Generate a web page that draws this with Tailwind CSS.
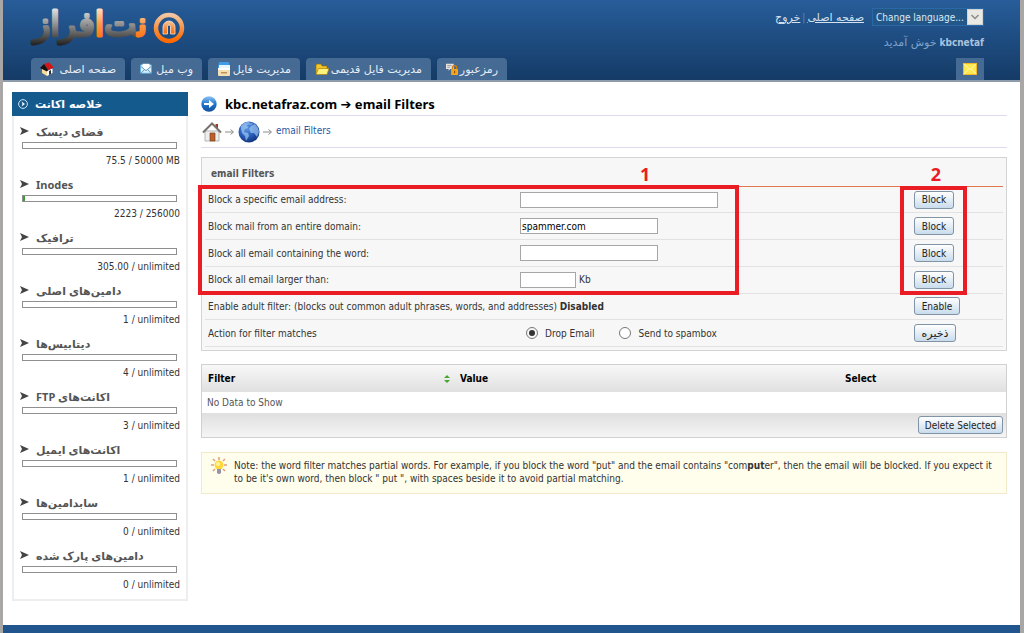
<!DOCTYPE html>
<html lang="en">
<head>
<meta charset="utf-8">
<title>email Filters</title>
<script src="https://cdn.jsdelivr.net/npm/@tailwindcss/browser@4"></script>
</head>
<body class="min-h-screen bg-[#a9a7a6] pl-[3px] pr-1 font-['DejaVu_Sans_Condensed','DejaVu_Sans',sans-serif] text-[10px] leading-[13px] text-[#333] [&_[lang=fa]]:font-['DejaVu_Sans'] [&_[lang=fa]]:text-[11px]">
<div class="flex min-h-screen flex-col bg-white">

<header class="flex h-[82px] justify-between border-b-2 border-[#8e9bab] bg-linear-to-b from-[#275d9a] to-[#153b66] pr-9 pl-7">
  <div class="flex flex-col justify-between">
    <a href="#" aria-label="نت افراز" class="flex h-12 items-center gap-1">
      <svg class="h-12 w-[118px] overflow-visible" viewBox="0 0 118 48" direction="rtl">
        <defs>
          <linearGradient id="steel" gradientUnits="userSpaceOnUse" x1="0" y1="5" x2="0" y2="46"><stop offset="0" stop-color="#f4f4f4"/><stop offset=".5" stop-color="#8b8b8b"/><stop offset="1" stop-color="#1c1c1c"/></linearGradient>
          <linearGradient id="flame" gradientUnits="userSpaceOnUse" x1="0" y1="5" x2="0" y2="42"><stop offset="0" stop-color="#fff0e2"/><stop offset=".5" stop-color="#ff9a4a"/><stop offset="1" stop-color="#ff6a00"/></linearGradient>
        </defs>
        <text x="116" y="36" font-family="DejaVu Sans" font-size="34" stroke-width="3" stroke-linejoin="round"><tspan fill="url(#flame)" stroke="url(#flame)">ن</tspan><tspan fill="url(#steel)" stroke="url(#steel)">ت‌</tspan><tspan fill="url(#flame)" stroke="url(#flame)">ا</tspan><tspan fill="url(#steel)" stroke="url(#steel)">فراز</tspan></text>
      </svg>
      <svg class="mt-2 size-8" viewBox="0 0 32 32">
        <defs><linearGradient id="ring" x1="0" y1="0" x2="0" y2="1"><stop offset="0" stop-color="#f3c6a0"/><stop offset=".5" stop-color="#f99244"/><stop offset="1" stop-color="#ff6a00"/></linearGradient></defs>
        <circle cx="16" cy="16" r="13" fill="none" stroke="url(#ring)" stroke-width="4.5"/>
        <path d="M10 22v-7a6 6 0 0 1 12 0v7h-4.500v-7.500a1.500 1.500 0 0 0-3 0V22z" fill="url(#ring)" stroke="#fbe3cf" stroke-width=".8"/>
      </svg>
    </a>
    <nav dir="ltr" class="flex gap-1.5 text-[#e8eef5]">
      <a href="#" class="flex h-[22px] w-[94px] items-center justify-between rounded-t-sm bg-[#456a94] px-[9px]">
        <svg class="size-3.5" viewBox="0 0 14 14"><path d="M2 6.500 7 9v5L2 11z" fill="#f6dc9a"/><path d="M7 9l5.500-2.500V11L7 14z" fill="#fff"/><path d="M4 2l5-1.500 5 5L8 8z" fill="#d31616"/><path d="M0 6 4 2l4 6-1 1.500z" fill="#111"/><path d="M9 9l2-1v4l-2 1z" fill="#333"/></svg>
        <span lang="fa" dir="rtl">صفحه اصلی</span></a>
      <a href="#" class="flex h-[22px] w-[71px] items-center justify-between rounded-t-sm bg-[#456a94] px-[9px]">
        <svg class="h-3.5 w-3" viewBox="0 0 14 14"><rect x=".5" y="2" width="13" height="10" rx="1" fill="#d7effc" stroke="#5fa9dd"/><path d="M3 1h8v5L7 8.500 3 6z" fill="#fff"/><path d="M1 4l6 5 6-5M1 12l4-4M13 12 9 8" fill="none" stroke="#4b86b8"/></svg>
        <span lang="fa" dir="rtl">وب میل</span></a>
      <a href="#" class="flex h-[22px] w-[92px] items-center justify-between rounded-t-sm bg-[#456a94] px-[9px]">
        <svg class="size-3.5" viewBox="0 0 14 14"><path d="M2 0h10l1 6H1z" fill="#3f9be6"/><path d="M2 3h11v4H2z" fill="#e7f5ff"/><path d="M1 6h12v7q0 1-1 1H2q-1 0-1-1z" fill="#f4dfb4"/><path d="M1 6h12v2H1z" fill="#fff"/><path d="M4 10h6v1.500H4z" fill="#b8935c"/></svg>
        <span lang="fa" dir="rtl">مدیریت فایل</span></a>
      <a href="#" class="flex h-[22px] w-[125px] items-center justify-between rounded-t-sm bg-[#456a94] px-[9px]">
        <svg class="size-3.5" viewBox="0 0 14 14"><path d="M1 12V3l1-1h4l1 2h5v3" fill="#f5c72b" stroke="#9a6d09" stroke-width=".7"/><path d="M1 12.500 3.500 6.500H14l-2 6z" fill="#fff27a" stroke="#a87d10" stroke-width=".7"/></svg>
        <span lang="fa" dir="rtl">مدیریت فایل قدیمی</span></a>
      <a href="#" class="flex h-[22px] w-[70px] items-center justify-between rounded-t-sm bg-[#456a94] px-[9px]">
        <svg class="h-3.5 w-3" viewBox="0 0 14 14"><path d="M0 1h9v6H5l-2 2V7H0z" fill="#e7e3dc"/><path d="M1.500 3h5M1.500 5h3" stroke="#8c96a3"/><path d="M7.500 8V5.500a2.500 2.500 0 0 1 5 0V8" fill="none" stroke="#d97c05" stroke-width="1.500"/><rect x="6" y="7" width="8" height="7" rx="1" fill="#f5a61a"/><path d="M10 9v3" stroke="#8f4c00" stroke-width="1.300"/></svg>
        <span lang="fa" dir="rtl">رمزعبور</span></a>
    </nav>
  </div>
  <div class="flex flex-col items-end justify-between pt-2">
    <div class="flex items-center gap-0.5">
      <a href="#" lang="fa" dir="rtl" class="text-[#d5e1ee] underline">خروج</a>
      <span class="text-[#5c8abb]">|</span>
      <a href="#" lang="fa" dir="rtl" class="text-[#d5e1ee] underline">صفحه اصلی</a>
      <div class="relative ml-1.5">
        <select aria-label="Change language" class="h-[18px] w-28 appearance-none border border-[#2a68a8] bg-[#235788] pl-[3px] text-[#dce8f4]"><option>Change language...</option></select>
        <svg class="pointer-events-none absolute top-px right-px size-4" viewBox="0 0 16 16"><rect width="15" height="15" x=".5" y=".5" fill="#e9e8e3" stroke="#cfd3d6"/><path d="M4.500 6 8 9.500 11.500 6" fill="none" stroke="#8b8b8b" stroke-width="1.500"/></svg>
      </div>
    </div>
    <p dir="rtl" class="text-[#7da3cc]"><b class="text-[#a9c2de]">kbcnetaf</b> <span lang="fa">خوش آمدید</span></p>
    <a href="#" aria-label="Messages" class="flex h-[22px] w-7 items-center justify-center bg-[#456a94]">
      <svg class="h-3 w-3.5" viewBox="0 0 14 12"><rect x=".5" y=".5" width="13" height="11" fill="#fde94f" stroke="#f2b92c"/><path d="M1 1l6 5.500L13 1M1 11l4.500-5M13 11 8.500 6" fill="none" stroke="#fff9ba"/></svg>
    </a>
  </div>
</header>

<div class="flex flex-1 items-start gap-[13px] pt-2.5 pr-[13px] pb-6 pl-[9px]">
  <aside class="w-44 shrink-0">
    <h2 class="flex h-6 items-center gap-[7px] bg-[#155a8d] pl-1.5 font-bold text-white">
      <svg class="size-2.5" viewBox="0 0 10 10"><circle cx="5" cy="5" r="4.400" fill="none" stroke="#cfe2f1"/><path d="M3.500 2.500 7 5 3.500 7.500 4.500 5z" fill="#fff"/></svg>
      <span lang="fa" dir="rtl">خلاصه اکانت</span></h2>
    <ul id="stats" class="border-2 border-t-0 border-[#eeeeee] px-1.5 pt-1 pb-0.5"></ul>
  </aside>

  <main class="min-w-0 flex-1">
    <h1 class="flex h-6 items-center gap-2 border-b border-[#dcdcee] font-['Noto_Sans','DejaVu_Sans'] text-[13px] leading-4 font-bold text-black">
      <svg class="size-4" viewBox="0 0 16 16"><defs><linearGradient id="ball" x1="0" y1="0" x2="0" y2="1"><stop offset="0" stop-color="#8fc4f4"/><stop offset=".5" stop-color="#2075cc"/><stop offset="1" stop-color="#134f9b"/></linearGradient></defs><circle cx="8" cy="8" r="7.700" fill="url(#ball)"/><path d="M3 7h5V4l5 4-5 4V9H3z" fill="#fff"/></svg>
      <span>kbc.netafraz.com ➔ email Filters</span></h1>
    <nav class="flex h-8 items-center gap-[3px] border-b border-[#dcdcee] pl-px text-[#999]">
      <a href="#" aria-label="Home"><svg class="size-5" viewBox="0 0 20 20"><path d="M3 9h14v10H3z" fill="#eee" stroke="#b5b5b5"/><path d="M13.500 2H16v5l-2.500-2z" fill="#a33b22"/><path d="M1 10.500 10 1.500l9 9" fill="none" stroke="#76736d" stroke-width="2"/><path d="M8 11h5v8H8z" fill="#b9602b" stroke="#7e4523" stroke-width=".7"/></svg></a>
      <svg class="h-2 w-2.5" viewBox="0 0 10 8"><path d="M0 4h8M5.500 1.500 8.500 4 5.500 6.500" fill="none" stroke="#8c8c8c"/></svg>
      <a href="#" aria-label="Domain"><svg class="size-[22px]" viewBox="0 0 22 22"><defs><radialGradient id="sea" cx=".4" cy=".3" r=".75"><stop offset="0" stop-color="#5f9ae6"/><stop offset=".6" stop-color="#2458b4"/><stop offset="1" stop-color="#102f75"/></radialGradient></defs><circle cx="11" cy="11" r="10.500" fill="url(#sea)"/><path d="M3 5q3-4 8-4l1 2-3 1 1 3-3 1-1 3 4 1 1 3-3 5-1-5-3-3-1-4zM13 5l4-2 3 4 1 4-2 5-3-4-3 0-2-4zM11 3l3-1 1 1-3 1z" fill="#a6cdf4" opacity=".65"/></svg></a>
      <svg class="h-2 w-2.5" viewBox="0 0 10 8"><path d="M0 4h8M5.500 1.500 8.500 4 5.500 6.500" fill="none" stroke="#8c8c8c"/></svg>
      <a href="#" class="-mt-0.5 text-[#1e5aa8]">email Filters</a>
    </nav>

    <form class="relative mt-[9px] border border-[#d4d4d4] bg-[#f7f7f7] px-[3px] pb-[3px]">
      <h2 class="flex h-[29px] items-center border-b border-b-[#e0764c] pt-0.5 pl-1.5 font-bold text-[#555]">email Filters</h2>
      <table class="h-[160px] w-full border-collapse">
        <tbody>
          <tr class="border-b border-[#e2e2e2]"><td class="w-[315px] pl-[3px]"><label for="addr">Block a specific email address:</label></td><td><input id="addr" class="block h-4 w-[198px] border border-[#a6a6a6] bg-white px-px text-black"></td><td class="w-[89px]"><button type="button" class="block h-[18px] w-10 rounded-[3px] border border-[#8094a6] bg-linear-to-b from-white to-[#c9dcec] text-center text-[#222]">Block</button></td></tr>
          <tr class="border-b border-[#e2e2e2]"><td class="pl-[3px]"><label for="dom">Block mail from an entire domain:</label></td><td><input id="dom" value="spammer.com" class="block h-4 w-[138px] border border-[#a6a6a6] bg-white px-px text-black"></td><td><button type="button" class="block h-[18px] w-10 rounded-[3px] border border-[#8094a6] bg-linear-to-b from-white to-[#c9dcec] text-center text-[#222]">Block</button></td></tr>
          <tr class="border-b border-[#e2e2e2]"><td class="pl-[3px]"><label for="word">Block all email containing the word:</label></td><td><input id="word" class="block h-4 w-[138px] border border-[#a6a6a6] bg-white px-px text-black"></td><td><button type="button" class="block h-[18px] w-10 rounded-[3px] border border-[#8094a6] bg-linear-to-b from-white to-[#c9dcec] text-center text-[#222]">Block</button></td></tr>
          <tr class="border-b border-[#e2e2e2]"><td class="pl-[3px]"><label for="size">Block all email larger than:</label></td><td><div class="flex items-center gap-[3px]"><input id="size" class="block h-4 w-14 border border-[#a6a6a6] bg-white px-px text-black"><span>Kb</span></div></td><td><button type="button" class="block h-[18px] w-10 rounded-[3px] border border-[#8094a6] bg-linear-to-b from-white to-[#c9dcec] text-center text-[#222]">Block</button></td></tr>
          <tr class="border-b border-[#e2e2e2]"><td colspan="2" class="pl-[3px]">Enable adult filter: (blocks out common adult phrases, words, and addresses) <b>Disabled</b></td><td><button type="button" class="block h-[18px] w-[46px] rounded-[3px] border border-[#8094a6] bg-linear-to-b from-white to-[#c9dcec] text-center text-[#222]">Enable</button></td></tr>
          <tr class="border-b border-[#e2e2e2]"><td class="pl-[3px]">Action for filter matches</td><td><div class="flex gap-[25px] pl-1.5">
            <label class="flex items-center gap-[7px]"><input type="radio" name="act" checked class="size-3 appearance-none rounded-full border border-[#777] bg-[#333] bg-clip-content p-0.5">Drop Email</label>
            <label class="flex items-center gap-[7px]"><input type="radio" name="act" class="size-3 appearance-none rounded-full border border-[#777] bg-white">Send to spambox</label></div></td><td><button type="button" lang="fa" class="block h-[18px] w-[42px] rounded-[3px] border border-[#8094a6] bg-linear-to-b from-white to-[#c9dcec] text-center text-[#222]">ذخیره</button></td></tr>
        </tbody>
      </table>
      <div class="pointer-events-none absolute top-[27px] -left-1 h-[110px] w-[541px] border-4 border-[#ea1c24]"></div>
      <div class="pointer-events-none absolute top-[28px] right-[39px] h-[109px] w-[67px] border-4 border-[#ea1c24]"></div>
      <span class="absolute top-1 left-[438px] font-['Open_Sans'] text-lg leading-6 font-bold text-[#ea1c24]">1</span>
      <span class="absolute top-1 right-[65px] font-['Open_Sans'] text-lg leading-6 font-bold text-[#ea1c24]">2</span>
    </form>

    <div class="mt-[13px] border border-[#d0d0d0]">
      <table class="w-full">
        <thead><tr class="h-[27px] bg-linear-to-b from-[#f8f8f8] to-[#e0e0e0] text-left text-black">
          <th class="w-[252px] pr-1 pl-1.5"><div class="flex items-center justify-between">Filter<svg class="h-2 w-1.5" viewBox="0 0 6 8"><path d="M3 0l3 3H0zM0 5h6L3 8z" fill="#4aa52e"/></svg></div></th>
          <th class="pl-1.5">Value</th><th class="w-[161px]">Select</th></tr></thead>
        <tbody><tr class="h-[21px] text-[#555]"><td colspan="3" class="pl-[5px]">No Data to Show</td></tr></tbody>
      </table>
      <div class="flex h-6 items-center justify-end bg-linear-to-b from-[#dfdfdf] to-[#f5f5f5] pr-[3px]">
        <button type="button" class="h-[18px] w-[85px] rounded-[3px] border border-[#8094a6] bg-linear-to-b from-white to-[#c9dcec] text-[#222]">Delete Selected</button>
      </div>
    </div>

    <div class="mt-3.5 flex gap-1.5 border border-[#f0eacb] bg-[#fffdec] px-2 pt-1.5 pb-2">
      <svg class="-mt-0.5 size-[18px] shrink-0" viewBox="0 0 18 18"><path d="M9 0v3M3 2l2 2M15 2l-2 2M1 8h3M14 8h3M3 14l2-2M15 14l-2-2" stroke="#dda07c" stroke-width="1.500"/><circle cx="9" cy="8" r="4.500" fill="#ffd83b"/><circle cx="8" cy="7" r="2" fill="#fff3a0"/><path d="M7 12h4v4q-2 2-4 0z" fill="#9493a8"/></svg>
      <p>Note: the word filter matches partial words. For example, if you block the word "put" and the email contains "com<b>put</b>er", then the email will be blocked. If you expect it to be it's own word, then block " put ", with spaces beside it to avoid partial matching.</p>
    </div>
  </main>
</div>
<footer class="h-2 bg-[#20558e]"></footer>
</div>
<template id="stat">
  <li class="h-[53px]">
    <h3 class="flex h-[22px] items-center gap-[7px] font-['Noto_Sans','DejaVu_Sans'] text-[11px] font-bold text-[#555]"><svg class="h-2 w-[9px]" viewBox="0 0 9 8"><path d="M0 0l9 4-9 4 2-4z" fill="#444"/></svg><span></span></h3>
    <div class="mr-[3px] ml-0.5 h-[7px] border border-[#8f8f8f]"><div class="h-full bg-[#3c9a3c]"></div></div>
    <p class="pt-[5px] text-right"></p>
  </li>
</template>
<script>
[["فضای دیسک","75.5 / 50000 MB",0],["Inodes","2223 / 256000",1],["ترافیک","305.00 / unlimited",0],["دامین‌های اصلی","1 / unlimited",0],["دیتابیس‌ها","4 / unlimited",0],["اکانت‌های FTP","3 / unlimited",0],["اکانت‌های ایمیل","1 / unlimited",0],["سابدامین‌ها","0 / unlimited",0],["دامین‌های پارک شده","0 / unlimited",0]].forEach(([name, usage, pct]) => {
  const n = document.getElementById("stat").content.cloneNode(true);
  const s = n.querySelector("span");
  s.textContent = name;
  s.dir = "auto";
  n.querySelector("p").textContent = usage;
  n.querySelector("div > div").style.width = pct + "%";
  document.getElementById("stats").append(n);
});
</script>
</body>
</html>
